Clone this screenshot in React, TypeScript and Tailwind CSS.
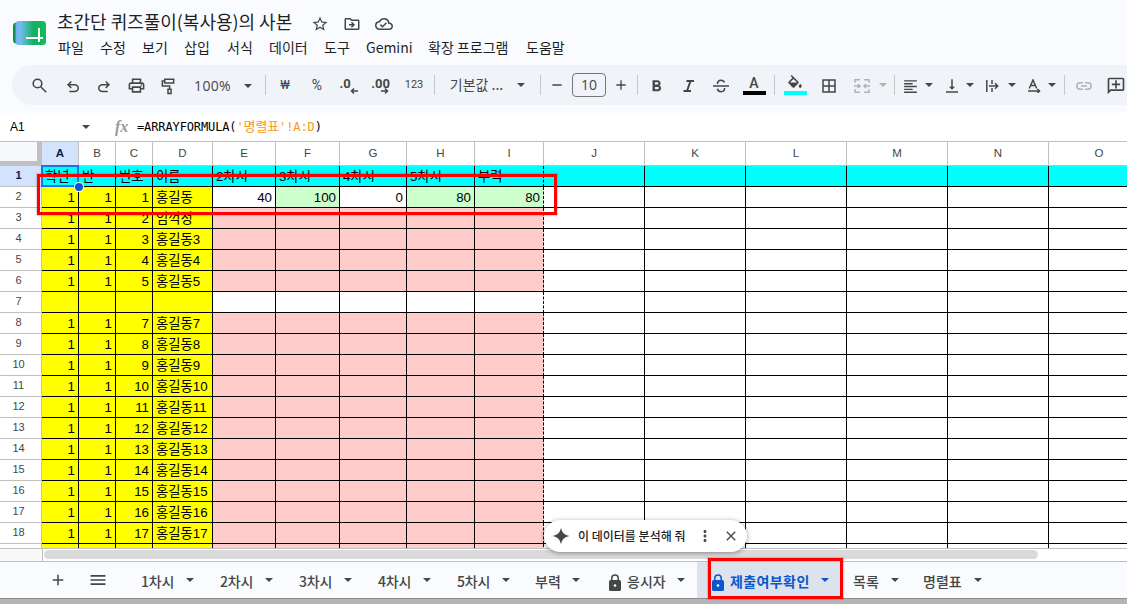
import type { ReactNode } from "react";
import {
  MdAdd,
  MdBorderAll,
  MdClose,
  MdFormatAlignLeft,
  MdFormatBold,
  MdFormatColorFill,
  MdMenu,
  MdMoreVert,
  MdOutlineAddComment,
  MdOutlineCloudDone,
  MdOutlineDriveFileMove,
  MdOutlinePrint,
  MdRemove,
  MdStarBorder,
  MdVerticalAlignBottom,
} from "react-icons/md";

function Caret({ className = "" }: { className?: string }) {
  return (
    <svg viewBox="0 0 8 4" className={`h-[4px] w-[8px] shrink-0 ${className}`} fill="currentColor">
      <path d="M0 0h8L4 4z" />
    </svg>
  );
}

function Lock({ className = "" }: { className?: string }) {
  return (
    <svg viewBox="0 0 12 17" className={`h-[17px] w-[12px] shrink-0 ${className}`}>
      <path d="M2.800 7V4.200a3.200 3.200 0 0 1 6.400 0V7" fill="none" stroke="currentColor" strokeWidth="1.500" />
      <rect x="0" y="6" width="12" height="11" rx="1.500" fill="currentColor" />
      <circle cx="6" cy="11.500" r="1.300" fill="#fff" />
    </svg>
  );
}

function Slot({ className, children }: { className: string; children?: ReactNode }) {
  return <div className={`flex shrink-0 items-center justify-center whitespace-nowrap ${className}`}>{children}</div>;
}

function Divider({ className }: { className: string }) {
  return (
    <Slot className={className}>
      <div className="h-5 w-px shrink-0 bg-[#c7c7c7]" />
    </Slot>
  );
}

function Logo() {
  return (
    <svg viewBox="0 0 34 26" className="h-[26px] w-[34px]">
      <defs>
        <linearGradient id="sheet" x1="0" x2="1" y1="0" y2="0">
          <stop offset="0" stopColor="#6cb4e8" />
          <stop offset="0.15" stopColor="#74bdf5" />
          <stop offset="0.6" stopColor="#12b05c" />
          <stop offset="1" stopColor="#12bd5c" />
        </linearGradient>
      </defs>
      <rect x="1" y="2.500" width="12" height="21" rx="3.500" fill="#0c9147" />
      <rect x="3.500" y="1" width="30.500" height="24" rx="3.500" fill="url(#sheet)" />
      <path d="M14 18h17M27 8v14" stroke="#fff" strokeWidth="2" fill="none" />
    </svg>
  );
}

const menus = [
  ["파일", "w-[42px]"],
  ["수정", "w-[42px]"],
  ["보기", "w-[42px]"],
  ["삽입", "w-[43px]"],
  ["서식", "w-[42px]"],
  ["데이터", "w-[55px]"],
  ["도구", "w-[42px]"],
  ["Gemini", "w-[62px]"],
  ["확장 프로그램", "w-[98px]"],
  ["도움말", "w-[42px]"],
];

function Header() {
  return (
    <header className="flex h-[65px] shrink-0">
      <div className="w-[57px] shrink-0 pt-5 pl-3">
        <Logo />
      </div>
      <div className="flex flex-col">
        <div className="flex h-[37px] items-center pt-2">
          <h1 className="w-[254px] pb-[3px] text-[18px] leading-[26px] tracking-[-0.02px] whitespace-nowrap text-[#1f1f1f]">
            초간단 퀴즈풀이(복사용)의 사본
          </h1>
          <div className="flex gap-[14px] pt-0.5 text-[18px] text-[#444746]">
            <MdStarBorder />
            <MdOutlineDriveFileMove />
            <MdOutlineCloudDone />
          </div>
        </div>
        <nav className="flex h-5 items-center pl-px text-[14px] whitespace-nowrap text-[#1f1f1f]">
          {menus.map(([label, width]) => (
            <span key={label} className={`shrink-0 ${width}`}>
              {label}
            </span>
          ))}
        </nav>
      </div>
    </header>
  );
}

function Toolbar() {
  return (
    <div className="ml-3 flex h-10 shrink-0 overflow-hidden rounded-l-full bg-[#f0f4f9] pl-[10px] text-[14px] text-[#444746]">
      <Slot className="w-[34px]">
        <svg viewBox="0 0 15 15" className="size-[15px] shrink-0" fill="none" stroke="currentColor" strokeWidth="1.600">
          <circle cx="5.500" cy="5.500" r="4.300" />
          <path d="m8.700 8.700 5.500 5.500" />
        </svg>
      </Slot>
      <Slot className="w-[34px] pt-1">
        <svg viewBox="0 -960 960 960" className="size-[18px] shrink-0" fill="currentColor">
          <path d="M280-200v-80h284q63 0 109.500-40T720-420q0-60-46.500-100T564-560H312l104 104-56 56-200-200 200-200 56 56-104 104h252q97 0 166.500 63T800-420q0 94-69.500 157T564-200H280Z" />
        </svg>
      </Slot>
      <Slot className="w-[28px] pt-1">
        <svg viewBox="0 -960 960 960" className="size-[18px] shrink-0" fill="currentColor">
          <path d="M396-200q-97 0-166.500-63T160-420q0-94 69.500-157T396-640h252L544-744l56-56 200 200-200 200-56-56 104-104H396q-63 0-109.500 40T240-420q0 60 46.500 100T396-280h284v80H396Z" />
        </svg>
      </Slot>
      <Slot className="w-[37px] pt-px text-[19px]">
        <MdOutlinePrint />
      </Slot>
      <Slot className="w-[25px] pt-[3px]">
        <svg viewBox="0 0 14 18" className="h-[17px] w-[14px] shrink-0" fill="none" stroke="currentColor" strokeWidth="1.600">
          <path d="M3.500 1.300h9.500v4H3.500zM3.500 3.300H1v5.200h7.700v3M7 11.800h3.200v4.700H7z" />
        </svg>
      </Slot>
      <Slot className="w-[65px] pt-px font-['Open_Sans','Noto_Sans_CJK_KR',sans-serif] text-[14px] tracking-[0.300px]">
        100%
      </Slot>
      <Slot className="w-[6px] pt-px">
        <Caret />
      </Slot>
      <Divider className="w-[28px]" />
      <Slot className="w-[12px] font-['Roboto','Noto_Sans_CJK_KR',sans-serif] text-[13px]">₩</Slot>
      <Slot className="w-[52px] font-['Roboto','Noto_Sans_CJK_KR',sans-serif] text-[14px]">%</Slot>
      <Slot className="w-[12px]">
        <div className="flex flex-col items-center pt-0.5 font-['Roboto',sans-serif] text-[13px] leading-[12px] font-bold">
          <span className="-ml-2">.0</span>
          <svg viewBox="0 0 8 6" className="-mt-0.5 ml-[10px] h-[6px] w-[8px]" fill="none" stroke="currentColor" strokeWidth="1.500">
            <path d="M8 3H1.500M4 0.500 1.500 3 4 5.500" />
          </svg>
        </div>
      </Slot>
      <Slot className="w-[52px]">
        <div className="flex flex-col items-center pt-0.5 font-['Roboto',sans-serif] text-[13px] leading-[12px] font-bold">
          <span className="-ml-px">.00</span>
          <svg viewBox="0 0 8 6" className="-mt-0.5 ml-[8px] h-[6px] w-[8px]" fill="none" stroke="currentColor" strokeWidth="1.500">
            <path d="M0 3h6.500M4 0.500 6.500 3 4 5.500" />
          </svg>
        </div>
      </Slot>
      <Slot className="w-[14px] pt-px font-['Roboto',sans-serif] text-[11px]">123</Slot>
      <Divider className="w-[26px]" />
      <Slot className="w-[59px] pb-0.5 text-[14px]">기본값 ...</Slot>
      <Slot className="w-[30px]">
        <Caret />
      </Slot>
      <Divider className="w-[8px]" />
      <Slot className="w-[26px] text-[16px]">
        <MdRemove />
      </Slot>
      <Slot className="w-[38px]">
        <div className="flex h-6 w-[34px] items-center justify-center rounded-[4px] border border-[#747775] pb-0.5 font-['Open_Sans',sans-serif] text-[14px] font-medium">
          10
        </div>
      </Slot>
      <Slot className="w-[26px] text-[16px]">
        <MdAdd />
      </Slot>
      <Divider className="w-[6px]" />
      <Slot className="w-[32px] pt-0.5 text-[19px]">
        <MdFormatBold />
      </Slot>
      <Slot className="w-[34px] pt-0.5">
        <svg viewBox="0 0 12 12" className="h-[12px] w-[12px] shrink-0" fill="none" stroke="currentColor" strokeWidth="2">
          <path d="M3.500 1H11M.500 11H8M7.500 1 4 11" />
        </svg>
      </Slot>
      <Slot className="w-[30px] pt-0.5">
        <svg viewBox="0 0 16 14" className="h-[14px] w-[16px] shrink-0" fill="none" stroke="currentColor" strokeWidth="1.600">
          <path d="M0 7h16M4.500 5c0-2.600 1.700-3.700 3.500-3.700 1.700 0 2.900.8 3.400 2.300M4.300 9.700c.5 1.900 1.900 3 3.800 3 2.200 0 3.600-1.200 3.500-3.700" />
        </svg>
      </Slot>
      <Slot className="w-[36px]">
        <div className="flex flex-col items-center">
          <span className="font-['Roboto',sans-serif] text-[14px] leading-[16px] font-medium">A</span>
          <div className="h-[4px] w-[23px] bg-black" />
        </div>
      </Slot>
      <Divider className="w-[4px]" />
      <Slot className="w-[38px]">
        <div className="flex flex-col items-center">
          <div className="h-[16px] text-[17px]">
            <MdFormatColorFill viewBox="0 0 24 20" className="h-[15px] w-[18px]" />
          </div>
          <div className="h-[4px] w-[23px] bg-[#00ffff]" />
        </div>
      </Slot>
      <Slot className="w-[30px] pt-0.5 text-[18px]">
        <MdBorderAll />
      </Slot>
      <Slot className="w-[36px] pt-0.5 text-[#b0b3b5]">
        <svg viewBox="0 0 16 14" className="h-[14px] w-[16px] shrink-0" fill="none" stroke="currentColor" strokeWidth="1.500">
          <path d="M6 .8H1v3M10 .8h5v3M6 13.200H1v-3M10 13.200h5v-3M0 7h6M4 5l2 2-2 2M16 7h-6M12 5l-2 2 2 2" />
        </svg>
      </Slot>
      <Slot className="w-[6px] text-[#b0b3b5]">
        <Caret />
      </Slot>
      <Divider className="w-[16px]" />
      <Slot className="w-[17px] pt-0.5 text-[19px]">
        <MdFormatAlignLeft />
      </Slot>
      <Slot className="w-[20px]">
        <Caret />
      </Slot>
      <Slot className="w-[25px] pt-0.5 text-[18px]">
        <MdVerticalAlignBottom />
      </Slot>
      <Slot className="w-[12px]">
        <Caret />
      </Slot>
      <Slot className="w-[33px] pt-0.5">
        <svg viewBox="0 0 13 12" className="h-[12px] w-[13px] shrink-0" fill="none" stroke="currentColor" strokeWidth="1.500">
          <path d="M.8 0v12M6 0v4M6 8v4M3 6h8.500M9 3.300 11.700 6 9 8.700" />
        </svg>
      </Slot>
      <Slot className="w-[5px]">
        <Caret />
      </Slot>
      <Slot className="ml-1.5 w-[28px] pt-0.5">
        <svg viewBox="0 0 14 14" className="h-[14px] w-[14px] shrink-0" fill="none" stroke="currentColor" strokeWidth="1.500">
          <path d="M2.300 9.500 6 1l3.700 8.500M3.600 6.500h4.800M1 12h11M10.500 10l2 2-2 2" />
        </svg>
      </Slot>
      <Slot className="w-[8px]">
        <Caret />
      </Slot>
      <Divider className="w-[16px]" />
      <Slot className="w-[24px] pt-0.5 text-[19px] text-[#b0b3b5]">
        <MdLink19 />
      </Slot>
      <Slot className="w-[40px] pt-0.5 text-[20px]">
        <MdOutlineAddComment className="-scale-x-100" />
      </Slot>
    </div>
  );
}

function MdLink19() {
  return (
    <svg viewBox="0 0 16 8" className="h-[8px] w-[16px] shrink-0" fill="none" stroke="currentColor" strokeWidth="1.500">
      <path d="M7 .8H4a3.200 3.200 0 0 0 0 6.400h3M9 .8h3a3.200 3.200 0 0 1 0 6.400H9M5 4h6" />
    </svg>
  );
}

function FormulaBar() {
  return (
    <div className="mt-2 flex h-[28px] shrink-0 items-center bg-white">
      <span className="w-[82px] pl-[10px] font-['Liberation_Sans',sans-serif] text-[12px] text-black">A1</span>
      <Caret className="text-[#444746]" />
      <span className="ml-[25px] w-[22px] font-['Liberation_Serif',serif] text-[16px] font-bold text-[#9a9a9a] italic">fx</span>
      <span className="flex font-['DejaVu_Sans_Mono','Noto_Sans_CJK_KR',monospace] text-[12px] leading-[18px] tracking-[-0.120px] whitespace-pre text-black">
        =ARRAYFORMULA(
        <span className="text-[#f7981d]">
          '<span className="text-[13px]">명렬표</span>'!A:D
        </span>
        )
      </span>
    </div>
  );
}

const widths = [
  "w-[37px]", "w-[37px]", "w-[37px]", "w-[60px]", "w-[63px]", "w-[64px]", "w-[67px]", "w-[68px]", "w-[69px]",
  "w-[101px]", "w-[101px]", "w-[101px]", "w-[101px]", "w-[101px]", "w-[101px]",
];
const letters = "ABCDEFGHIJKLMNO".split("");
const titles = ["학년", "반", "번호", "이름", "2차시", "3차시", "4차시", "5차시", "부력"];
const names = ["홍길동", "임꺽정", "홍길동3", "홍길동4", "홍길동5"];
const scores = ["40", "100", "0", "80", "80"];

const rows = Array.from({ length: 19 }, (_, r): string[] => {
  if (r === 0) return titles;
  if (r === 6 || r === 18) return [];
  const base = ["1", "1", String(r), names[r - 1] ?? `홍길동${r}`];
  return r === 1 ? [...base, ...scores] : base;
});

function cellColor(r: number, c: number) {
  if (r === 0) return "bg-[#00ffff]";
  if (c < 4) return "bg-[#ffff00]";
  if (c > 8 || r === 6) return "bg-white";
  if (r === 1) return Number(scores[c - 4]) >= 80 ? "bg-[#ccffcc]" : "bg-white";
  return "bg-[#ffcccc]";
}

function Grid() {
  return (
    <div className="relative h-[407px] shrink-0 overflow-hidden border-t border-[#c0c0c0] bg-white">
      <div className="flex h-6 w-[1158px] font-['Liberation_Sans',sans-serif] text-[11.500px] text-[#444746]">
        <div className="h-6 w-[42px] shrink-0 border-r-[5px] border-b-[5px] border-[#c0c0c0] bg-[#f8f9fa]" />
        {letters.map((l, i) => (
          <div
            key={l}
            className={`flex shrink-0 items-center justify-center border-r border-b border-[#c0c0c0] ${widths[i]} ${
              i === 0 ? "bg-[#d3e3fd] font-bold text-[#041e49]" : ""
            }`}
          >
            {l}
          </div>
        ))}
      </div>
      {rows.map((row, r) => (
        <div key={r} className="flex h-[21px] w-[1158px]">
          <div
            className={`flex w-[42px] shrink-0 items-center justify-center border-r border-b border-[#c0c0c0] pr-1 pb-px font-['Liberation_Sans',sans-serif] text-[11px] ${
              r === 0 ? "bg-[#d3e3fd] font-bold text-[#041e49]" : "text-[#444746]"
            }`}
          >
            {r < 18 ? r + 1 : ""}
          </div>
          {widths.map((w, c) => {
            const numeric = r > 0 && c !== 3;
            return (
              <div
                key={c}
                className={`flex shrink-0 items-center border-r border-b border-black px-[3px] pt-[2px] font-['Liberation_Sans','Noto_Sans_CJK_KR',sans-serif] text-[13.330px] leading-[18px] whitespace-nowrap text-black ${w} ${cellColor(r, c)} ${
                  numeric ? "justify-end" : ""
                } ${c === 8 ? "[border-right-style:dashed]" : ""}`}
              >
                {row[c]}
              </div>
            );
          })}
        </div>
      ))}
      <div className="absolute top-[23px] left-[41px] h-[22px] w-[38px] border-2 border-[#1a73e8]" />
      <div className="absolute top-[41px] left-[75px] size-[8px] rounded-full bg-[#0b57d0] ring-1 ring-white" />
      <div className="absolute top-[32px] left-[37px] h-[41px] w-[520px] border-[3px] border-[#ff0000] shadow-[0_0_1px_1px_rgba(90,0,0,0.15)]" />
    </div>
  );
}

function ScrollBar() {
  return (
    <div className="flex h-[14px] shrink-0 border-y border-[#c0c0c0] bg-white">
      <div className="w-[43px] border-r border-[#c0c0c0] bg-[#f8f9fa]" />
      <div className="mt-px ml-px h-[9px] w-[994px] rounded-full bg-[#dadada]" />
    </div>
  );
}

const tabs = ["1차시", "2차시", "3차시", "4차시", "5차시"];

function Tabs() {
  return (
    <footer className="flex h-9 shrink-0 items-center bg-[#f9fbff] text-[14px] font-medium whitespace-nowrap text-[#444746]">
      <Slot className="ml-[49px] w-[18px] text-[18px]">
        <MdAdd />
      </Slot>
      <Slot className="ml-[22px] w-[18px] text-[20px]">
        <MdMenu className="shrink-0" />
      </Slot>
      <div className="ml-[34px] flex">
        {tabs.map((t) => (
          <div key={t} className="flex w-[79px] items-center">
            <span className="w-[45px] pt-[3px] tracking-[-0.200px]">{t}</span>
            <Caret />
          </div>
        ))}
      </div>
      <div className="flex w-[71px] items-center">
        <span className="-ml-px w-[37px] pt-[3px]">부력</span>
        <Caret />
      </div>
      <div className="flex w-[91px] items-center">
        <Lock className="mt-1 ml-[2px]" />
        <span className="ml-[6px] w-[50px] pt-[3px]">응시자</span>
        <Caret />
      </div>
      <div className="relative -ml-px flex h-9 w-[145px] items-center bg-[#dde3ec] pl-[15px] font-bold text-[#0b57d0]">
        <Lock className="mt-1" />
        <span className="ml-[6px] w-[91px] pt-[3px] tracking-[0.400px]">제출여부확인</span>
        <Caret />
        <div className="absolute -top-[4px] left-[11px] h-[41px] w-[135px] border-[3px] border-[#ff0000] shadow-[0_0_1px_1px_rgba(90,0,0,0.15)]" />
      </div>
      <div className="ml-[11px] flex w-[71px] items-center">
        <span className="w-[38px] pt-[3px]">목록</span>
        <Caret />
      </div>
      <div className="-ml-px flex items-center">
        <span className="w-[51px] pt-[3px]">명렬표</span>
        <Caret />
      </div>
    </footer>
  );
}

function SuggestionChip() {
  return (
    <div className="absolute top-[520px] left-[544px] flex h-8 w-[203px] items-center rounded-full bg-white pl-2 text-[#444746] shadow-[0_1px_5px_rgba(0,0,0,0.4)]">
      <svg viewBox="0 0 18 18" className="size-[18px] shrink-0" fill="currentColor">
        <path d="M9 .5C9.800 5.500 12.500 8.200 17.500 9 12.500 9.800 9.800 12.500 9 17.500 8.200 12.500 5.500 9.800.5 9 5.500 8.200 8.200 5.500 9 .5z" />
      </svg>
      <span className="ml-2 w-[118px] pb-px text-[12px] font-medium whitespace-nowrap text-[#1f1f1f]">이 데이터를 분석해 줘</span>
      <MdMoreVert className="size-[18px] shrink-0" />
      <MdClose className="ml-[9px] size-[16px] shrink-0" />
    </div>
  );
}

export default function App() {
  return (
    <div className="relative flex h-[604px] w-[1127px] flex-col overflow-hidden bg-[#f9fbff] font-['Noto_Sans_CJK_KR',sans-serif]">
      <Header />
      <Toolbar />
      <FormulaBar />
      <Grid />
      <ScrollBar />
      <Tabs />
      <div className="h-[6px] shrink-0 border-t border-[#8c8c8c] bg-[#b5b5b5]" />
      <SuggestionChip />
    </div>
  );
}
